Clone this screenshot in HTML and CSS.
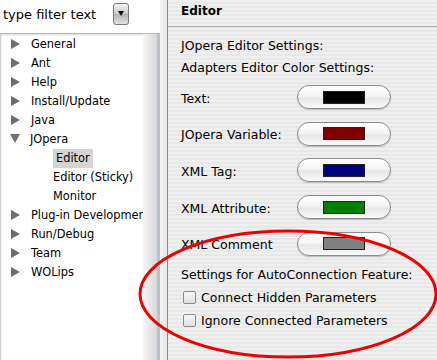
FILE: index.html
```html
<!DOCTYPE html>
<html>
<head>
<meta charset="utf-8">
<link rel="stylesheet" href="styles.css">
</head>
<body>
<div class="window">
  <div class="left">
    <div class="filter">
      <div class="filter-input">type filter text</div>
      <div class="filter-btn"><span class="down"></span></div>
    </div>
    <div class="tree-box">
      <ul class="tree">
        <li class="node"><span class="tri"></span>General</li>
        <li class="node"><span class="tri"></span>Ant</li>
        <li class="node"><span class="tri"></span>Help</li>
        <li class="node"><span class="tri"></span>Install/Update</li>
        <li class="node"><span class="tri"></span>Java</li>
        <li class="node"><span class="tri open"></span>JOpera</li>
        <li class="child"><span class="sel">Editor</span></li>
        <li class="child">Editor (Sticky)</li>
        <li class="child">Monitor</li>
        <li class="node"><span class="tri"></span>Plug-in Development</li>
        <li class="node"><span class="tri"></span>Run/Debug</li>
        <li class="node"><span class="tri"></span>Team</li>
        <li class="node"><span class="tri"></span>WOLips</li>
      </ul>
      <div class="tree-edge"></div>
    </div>
  </div>
  <div class="sash"></div>
  <div class="right">
    <div class="header">Editor</div>
    <div class="content">
      <div class="line">JOpera Editor Settings:</div>
      <div class="line">Adapters Editor Color Settings:</div>
      <div class="colors">
        <div class="crow"><span class="clabel">Text:</span><span class="cbtn"><span class="swatch" style="background:#000000"></span></span></div>
        <div class="crow"><span class="clabel">JOpera Variable:</span><span class="cbtn"><span class="swatch" style="background:#800000"></span></span></div>
        <div class="crow"><span class="clabel">XML Tag:</span><span class="cbtn"><span class="swatch" style="background:#000080"></span></span></div>
        <div class="crow"><span class="clabel">XML Attribute:</span><span class="cbtn"><span class="swatch" style="background:#008000"></span></span></div>
        <div class="crow"><span class="clabel">XML Comment</span><span class="cbtn"><span class="swatch" style="background:#808080"></span></span></div>
      </div>
      <div class="line auto">Settings for AutoConnection Feature:</div>
      <div class="check"><span class="box"></span>Connect Hidden Parameters</div>
      <div class="check"><span class="box"></span>Ignore Connected Parameters</div>
    </div>
  </div>
</div>
<svg class="ellipse" width="437" height="360" viewBox="0 0 437 360">
  <ellipse cx="288" cy="294" rx="148" ry="63" fill="none" stroke="#ee0000" stroke-width="3"/>
</svg>
</body>
</html>
```
FILE: styles.css
```css
html, body {
  margin: 0;
  padding: 0;
  width: 437px;
  height: 360px;
  overflow: hidden;
  background: #ffffff;
  font-family: "DejaVu Sans", sans-serif;
  font-size: 12px;
  color: #000;
}
.window {
  display: flex;
  height: 360px;
}
.left {
  width: 160px;
  background: #ffffff;
  display: flex;
  flex-direction: column;
}
.filter {
  display: flex;
  align-items: center;
  height: 33px;
  padding-left: 1px;
}
.filter-input {
  width: 104px;
  height: 22px;
  line-height: 22px;
  padding-left: 2px;
  font-size: 13px;
  box-sizing: border-box;
  margin-top: -4px;
}
.filter-btn {
  margin-left: 8px;
  margin-top: -6px;
  width: 16px;
  height: 22px;
  border: 1px solid #7a7a7a;
  border-radius: 3px;
  background: linear-gradient(#f4f4f4, #c8c8c8 50%, #b4b4b4 52%, #e0e0e0);
  display: flex;
  align-items: center;
  justify-content: center;
  box-sizing: border-box;
}
.down {
  width: 0;
  height: 0;
  border-left: 3px solid transparent;
  border-right: 3px solid transparent;
  border-top: 5px solid #111;
}
.tree-box {
  flex: 1;
  display: flex;
  border-top: 1px solid #b8b8b8;
  border-left: 1px solid #d0d0d0;
  box-shadow: inset 0 1px 2px rgba(0,0,0,0.15);
}
.tree {
  list-style: none;
  margin: 0;
  padding: 0;
  width: 142px;
  overflow: hidden;
  white-space: nowrap;
  font-size: 11.4px;
}
.tree li {
  height: 19px;
  line-height: 19px;
}
.tree li:first-child {
  margin-top: 1px;
}
.node {
  padding-left: 10px;
}
.tri {
  display: inline-block;
  width: 0;
  height: 0;
  border-top: 5px solid transparent;
  border-bottom: 5px solid transparent;
  border-left: 9px solid #6e6e6e;
  margin-right: 11px;
  vertical-align: -1px;
}
.tri.open {
  border-left: 5px solid transparent;
  border-right: 5px solid transparent;
  border-top: 9px solid #6e6e6e;
  border-bottom: 0;
  margin-left: -1px;
  margin-right: 10px;
  vertical-align: 0px;
}
.child {
  padding-left: 52px;
}
.sel {
  display: inline-block;
  background: #d4d4d4;
  padding: 0 3px;
  line-height: 19px;
}
.tree-edge {
  width: 14px;
  background: linear-gradient(90deg, #f6f6f6, #e4e4e4 60%, #d8d8d8);
  border-right: 3px solid #b8c2cc;
}
.sash {
  width: 7px;
  background: linear-gradient(90deg, #f2f2f2, #e6e6e6);
  border-right: 1px solid #8a8a8a;
}
.right {
  flex: 1;
  display: flex;
  flex-direction: column;
  font-size: 12.5px;
  background: repeating-linear-gradient(180deg, #efefef 0px, #efefef 2px, #e8e8e8 2px, #e8e8e8 4px);
}
.header {
  height: 27px;
  line-height: 22px;
  padding-left: 13px;
  font-weight: bold;
  font-size: 12px;
  border-bottom: 1px solid #a8a8a8;
  box-sizing: border-box;
}
.content {
  padding: 8px 0 0 13px;
}
.line {
  height: 22px;
  line-height: 22px;
}
.colors {
  margin-top: 6px;
  display: flex;
  flex-direction: column;
  gap: 12.7px;
}
.crow {
  display: flex;
  align-items: center;
  height: 24px;
}
.clabel {
  width: 116px;
  padding-top: 2px;
}
.cbtn {
  width: 94px;
  height: 24px;
  border: 1px solid #8c8c8c;
  border-radius: 12px;
  box-sizing: border-box;
  background: linear-gradient(#ffffff, #f4f4f4 45%, #e6e6e6 55%, #fafafa);
  box-shadow: 0 1px 1px rgba(0,0,0,0.2);
  display: flex;
  align-items: center;
  justify-content: center;
}
.swatch {
  width: 42px;
  height: 13px;
  border: 1px solid #222;
  box-sizing: border-box;
}
.auto {
  margin-top: 8px;
}
.check {
  display: flex;
  align-items: center;
  height: 23px;
}
.box {
  width: 13px;
  height: 13px;
  border: 1px solid #8a8a8a;
  border-radius: 2px;
  box-sizing: border-box;
  background: linear-gradient(#f8f8f8, #e0e0e0);
  margin-right: 5px;
  margin-left: 2px;
}
.ellipse {
  position: absolute;
  left: 0;
  top: 0;
  pointer-events: none;
}
```
